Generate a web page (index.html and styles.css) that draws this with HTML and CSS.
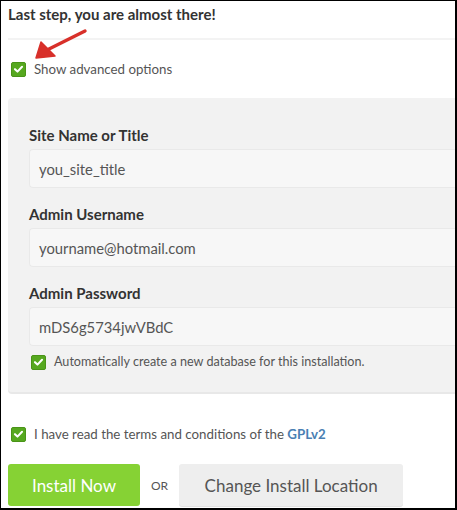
FILE: index.html
```html
<!DOCTYPE html>
<html>
<head>
<meta charset="utf-8">
<link rel="stylesheet" href="styles.css">
</head>
<body>
<div class="frame">
  <h1 class="title">Last step, you are almost there!</h1>
  <div class="divider"></div>
  <label class="check-row adv">
    <span class="box"><svg viewBox="0 0 14 14" width="14" height="14"><path d="M3.2 7.2 L5.9 9.8 L10.8 4.6" fill="none" stroke="#fff" stroke-width="2.2" stroke-linecap="round" stroke-linejoin="round"/></svg></span>
    <span>Show advanced options</span>
  </label>
  <svg class="arrow" viewBox="0 0 60 40" width="60" height="40"><path d="M56 3 L16 23" stroke="#d8302a" stroke-width="3.4" stroke-linecap="round"/><path d="M7 30 L12 14 L26 28 Z" fill="#d8302a" stroke="#d8302a" stroke-width="1.5" stroke-linejoin="round"/></svg>
  <div class="panel">
    <div class="field">
      <div class="label">Site Name or Title</div>
      <div class="input">you_site_title</div>
    </div>
    <div class="field">
      <div class="label">Admin Username</div>
      <div class="input">yourname@hotmail.com</div>
    </div>
    <div class="field">
      <div class="label">Admin Password</div>
      <div class="input">mDS6g5734jwVBdC</div>
    </div>
    <label class="check-row db">
      <span class="box"><svg viewBox="0 0 14 14" width="14" height="14"><path d="M3.2 7.2 L5.9 9.8 L10.8 4.6" fill="none" stroke="#fff" stroke-width="2.2" stroke-linecap="round" stroke-linejoin="round"/></svg></span>
      <span>Automatically create a new database for this installation.</span>
    </label>
  </div>
  <label class="check-row terms">
    <span class="box"><svg viewBox="0 0 14 14" width="14" height="14"><path d="M3.2 7.2 L5.9 9.8 L10.8 4.6" fill="none" stroke="#fff" stroke-width="2.2" stroke-linecap="round" stroke-linejoin="round"/></svg></span>
    <span>I have read the terms and conditions of the <a class="link">GPLv2</a></span>
  </label>
  <div class="actions">
    <button class="btn primary">Install Now</button>
    <span class="or">OR</span>
    <button class="btn secondary">Change Install Location</button>
  </div>
</div>
</body>
</html>
```

FILE: styles.css
```css
html, body {
  margin: 0;
  padding: 0;
  background: #fff;
}
.frame {
  position: relative;
  box-sizing: border-box;
  width: 457px;
  height: 510px;
  border-top: 1px solid #000;
  border-left: 1px solid #000;
  border-right: 2px solid #000;
  border-bottom: 2px solid #000;
  overflow: hidden;
  font-family: Lato, "Open Sans", sans-serif;
  color: #555;
  padding-left: 7px;
}
.title {
  margin: 0;
  padding-top: 4px;
  font-size: 15px;
  line-height: 18px;
  font-weight: 700;
  color: #333;
}
.divider {
  margin-top: 15px;
  height: 2px;
  background: #f3f3f3;
}
.check-row {
  display: flex;
  align-items: center;
  gap: 8px;
  font-size: 13.3px;
  line-height: 16px;
}
.box {
  width: 15px;
  height: 15px;
  flex: none;
  border-radius: 2px;
  background: #56a81f;
  border: 1px solid #4a9418;
  box-sizing: border-box;
  display: flex;
  align-items: center;
  justify-content: center;
}
.box svg { display: block; }
.adv {
  margin-top: 21px;
  margin-left: 3px;
}
.arrow {
  position: absolute;
  left: 28px;
  top: 27px;
}
.panel {
  margin-top: 21px;
  background: #f2f2f2;
  border-radius: 4px 0 0 4px;
  box-shadow: 0 2px 0 #e8e8e8;
  padding: 28px 0 22px 21px;
}
.field + .field { margin-top: 17px; }
.label {
  font-size: 15px;
  line-height: 18px;
  font-weight: 700;
  color: #333;
  margin-bottom: 5px;
}
.input {
  height: 39px;
  box-sizing: border-box;
  background: #f7f7f7;
  border: 1px solid #e9e9e9;
  border-right: none;
  border-radius: 4px 0 0 4px;
  padding-left: 9px;
  display: flex;
  align-items: center;
  font-size: 14.8px;
  color: #555;
}
.db {
  margin-top: 8px;
  margin-left: 2px;
  font-size: 12.6px;
}
.terms {
  margin-top: 34px;
  margin-left: 3px;
}
.link {
  color: #4a7fb3;
  font-weight: 700;
}
.actions {
  margin-top: 22px;
  display: flex;
  align-items: center;
  gap: 11px;
}
.btn {
  height: 42px;
  border: none;
  border-radius: 3px;
  font-family: inherit;
  font-size: 17px;
  padding: 0;
}
.primary {
  width: 132px;
  background: #86d234;
  color: #fff;
}
.secondary {
  width: 224px;
  background: #eeeeee;
  color: #555;
  box-shadow: 0 1px 0 #e2e2e2;
}
.or {
  font-size: 12px;
  color: #555;
}
```
